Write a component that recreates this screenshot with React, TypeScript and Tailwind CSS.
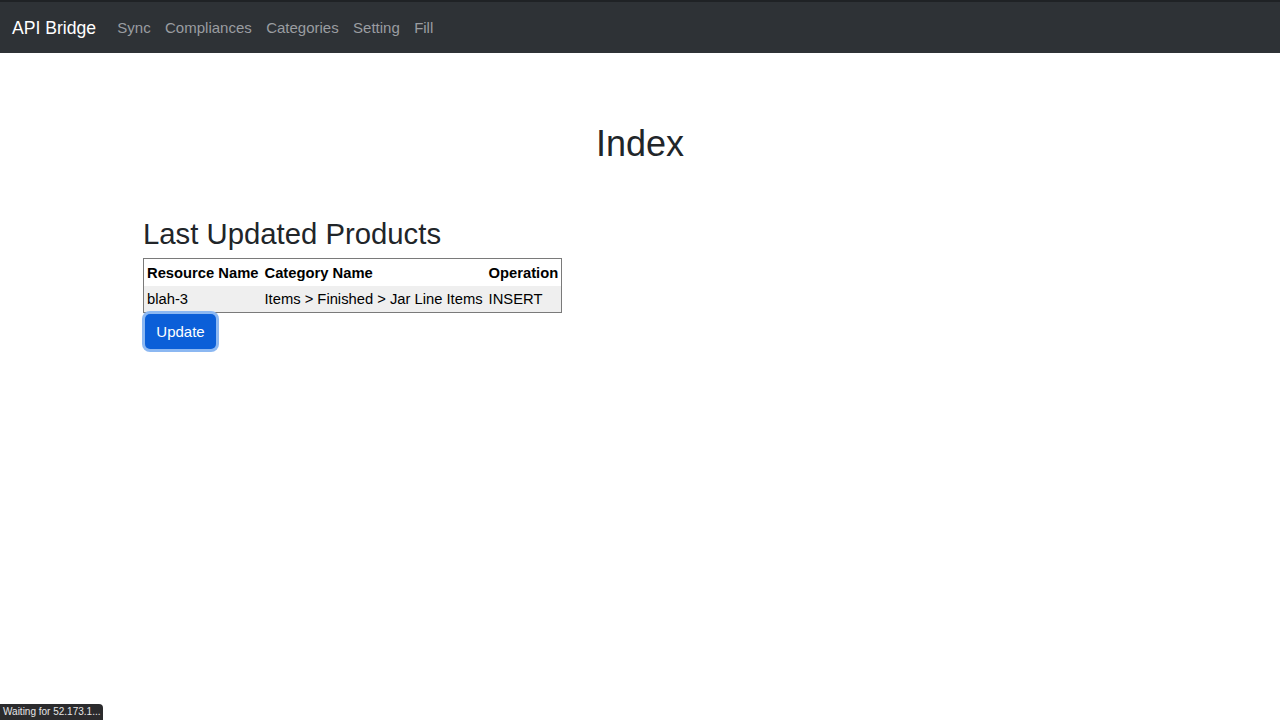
const navLinks = ["Sync", "Compliances", "Categories", "Setting", "Fill"];

const rows = [
  { resource: "blah-3", category: "Items > Finished > Jar Line Items", operation: "INSERT" },
];

export default function App() {
  return (
    <div className="relative min-h-[720px] bg-white font-['Liberation_Sans',Arial,sans-serif] text-[#212529]">
      {/* Navbar */}
      <nav className="flex h-[53px] items-center border-t-2 border-[#1f2225] bg-[#2e3236] pl-3 pt-[2px]">
        <span className="mr-[14px] text-[17.6px] text-white">API Bridge</span>
        <div className="flex">
          {navLinks.map((link) => (
            <span key={link} className="px-[7.2px] text-[15px] text-[#9a9da1]">
              {link}
            </span>
          ))}
        </div>
      </nav>

      <main className="mx-auto w-[994px]">
        <h1 className="mt-[69px] text-center text-[36px] leading-[1.2]">Index</h1>

        <h2 className="mt-[51px] mb-[7px] text-[29.3px] leading-[1.2]">Last Updated Products</h2>

        <table className="border-collapse border border-[#7a7a7a] text-[14.75px] text-black">
          <thead>
            <tr className="h-[27px]">
              <th className="px-[3px] text-left font-bold">Resource Name</th>
              <th className="px-[3px] text-left font-bold">Category Name</th>
              <th className="px-[3px] text-left font-bold">Operation</th>
            </tr>
          </thead>
          <tbody>
            {rows.map((row) => (
              <tr key={row.resource} className="h-[27px] bg-[#efefef]">
                <td className="px-[3px]">{row.resource}</td>
                <td className="px-[3px]">{row.category}</td>
                <td className="px-[3px]">{row.operation}</td>
              </tr>
            ))}
          </tbody>
        </table>

        <button className="ml-[2px] mt-[1px] h-[35px] w-[71px] rounded-[5px] bg-[#0b5fd8] text-[15px] text-white ring-[3px] ring-[#8cb8f2]">
          Update
        </button>
      </main>

      {/* browser status bubble */}
      <div className="absolute bottom-0 left-0 rounded-tr-[4px] bg-[#2b2b2d] px-[3px] py-[2px] text-[10px] leading-[12px] text-[#e6e6e6]">
        Waiting for 52.173.1...
      </div>
    </div>
  );
}
